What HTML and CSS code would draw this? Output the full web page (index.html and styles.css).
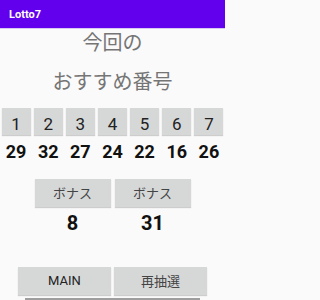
FILE: index.html
```html
<!DOCTYPE html>
<html lang="ja">
<head>
<meta charset="utf-8">
<title>Lotto7</title>
<link rel="stylesheet" href="styles.css">
</head>
<body>
<header class="appbar"><span class="appbar-title">Lotto7</span></header>
<main class="content">
  <div class="heading">
    <div class="heading-line">今回の</div>
    <div class="heading-line second">おすすめ番号</div>
  </div>
  <div class="grid7 labels">
    <div class="cell"><div class="btn num-btn">1</div></div>
    <div class="cell"><div class="btn num-btn">2</div></div>
    <div class="cell"><div class="btn num-btn">3</div></div>
    <div class="cell"><div class="btn num-btn">4</div></div>
    <div class="cell"><div class="btn num-btn">5</div></div>
    <div class="cell"><div class="btn num-btn">6</div></div>
    <div class="cell"><div class="btn num-btn">7</div></div>
  </div>
  <div class="grid7 values">
    <div>29</div><div>32</div><div>27</div><div>24</div><div>22</div><div>16</div><div>26</div>
  </div>
  <div class="bonus-row">
    <div class="btn bonus-btn">ボナス</div>
    <div class="btn bonus-btn">ボナス</div>
  </div>
  <div class="bonus-values">
    <div class="bonus-value">8</div>
    <div class="bonus-value">31</div>
  </div>
  <div class="action-row">
    <div class="btn action-btn main-btn">MAIN</div>
    <div class="btn action-btn">再抽選</div>
  </div>
  <div class="bottom-line"></div>
</main>
</body>
</html>
```
FILE: styles.css
```css
html, body {
  margin: 0;
  padding: 0;
  background: #fafafa;
}
body {
  width: 225px;
  height: 300px;
  overflow: hidden;
  font-family: Roboto, "Noto Sans CJK JP", sans-serif;
}
.appbar {
  height: 28px;
  background: #6200ee;
  display: flex;
  align-items: center;
  padding-left: 9px;
  border-bottom: 1px solid #d6c8f2;
  box-sizing: content-box;
}
.appbar-title {
  color: #ffffff;
  font-weight: 700;
  font-size: 11px;
}
.content {
  display: flex;
  flex-direction: column;
}
.heading {
  display: flex;
  flex-direction: column;
  align-items: center;
  color: #757575;
  font-family: "Noto Sans CJK JP", sans-serif;
  font-size: 20px;
}
.heading-line {
  line-height: 25px;
  height: 25px;
}
.heading-line.second {
  margin-top: 14px;
}
.grid7 {
  display: grid;
  grid-template-columns: repeat(7, 1fr);
}
.labels {
  margin-top: 15px;
}
.cell {
  padding: 0 1.5px;
}
.btn {
  background: #d6d7d7;
  box-shadow: 0 1px 1px rgba(0, 0, 0, 0.18);
  text-align: center;
  color: #2a2a2a;
}
.num-btn {
  height: 27px;
  box-sizing: border-box;
  padding-top: 6px;
  line-height: 21px;
  font-size: 17px;
  color: #222222;
}
.values {
  margin-top: 6px;
  line-height: 22px;
  font-size: 18px;
  font-weight: 700;
  color: #111111;
  text-align: center;
}
.bonus-row {
  margin-top: 16px;
  display: flex;
  justify-content: center;
  gap: 4px;
}
.bonus-btn {
  width: 76px;
  height: 28px;
  line-height: 28px;
  font-family: "Noto Sans CJK JP", sans-serif;
  font-size: 13px;
  color: #444444;
}
.bonus-values {
  margin-top: 4px;
  display: flex;
  justify-content: center;
  gap: 4px;
}
.bonus-value {
  width: 76px;
  text-align: center;
  font-size: 20px;
  font-weight: 700;
  line-height: 24px;
  color: #111111;
}
.action-row {
  margin-top: 32px;
  display: flex;
  justify-content: center;
  gap: 3px;
}
.action-btn {
  width: 93px;
  height: 28px;
  line-height: 28px;
  font-size: 13px;
  font-family: "Noto Sans CJK JP", sans-serif;
  color: #444444;
}
.main-btn {
  font-family: Roboto, sans-serif;
  font-weight: 400;
  color: #222222;
}
.bottom-line {
  margin: 3px 0 0 25px;
  width: 175px;
  height: 2px;
  background: #9e9e9e;
}
```
